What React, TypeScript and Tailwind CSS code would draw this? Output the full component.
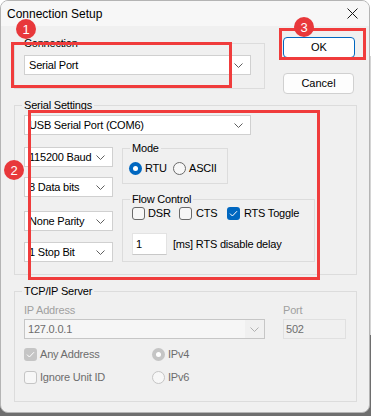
import React from 'react';

const FONT = "font-['Liberation_Sans',Arial,sans-serif]";

const Chevron: React.FC<{ color?: string }> = ({ color = '#5f5f5f' }) => (
    <svg width="9" height="5" viewBox="0 0 9 5" className="shrink-0">
        <path d="M0.5 0.5 L4.5 4.5 L8.5 0.5" fill="none" stroke={color} strokeWidth="1" />
    </svg>
);

const Combo: React.FC<{ text: string; className?: string }> = ({ text, className = '' }) => (
    <div className={`flex h-[20px] items-center justify-between border border-[#d0d0d0] bg-white pl-[4px] pr-[7px] text-[11px] tracking-[-0.2px] text-black ${className}`}>
        <span className="leading-none">{text}</span>
        <Chevron />
    </div>
);

const Group: React.FC<{ label: string; className?: string; legendClass?: string; children: React.ReactNode }> = ({
    label,
    className = '',
    legendClass = '-ml-[2px]',
    children,
}) => (
    <fieldset className={`border border-[#dcdcdc] ${className}`}>
        <legend className={`px-[2px] text-[11px] leading-[13px] tracking-[-0.2px] text-black ${legendClass}`}>{label}</legend>
        {children}
    </fieldset>
);

const Radio: React.FC<{ checked?: boolean; disabled?: boolean }> = ({ checked, disabled }) => {
    if (checked) {
        return (
            <span className={`flex h-[13px] w-[13px] shrink-0 items-center justify-center rounded-full ${disabled ? 'bg-[#c5c5c5]' : 'bg-[#0067c0]'}`}>
                <span className="h-[5px] w-[5px] rounded-full bg-white" />
            </span>
        );
    }
    return (
        <span className={`h-[13px] w-[13px] shrink-0 rounded-full border bg-[#f7f7f7] ${disabled ? 'border-[#c5c5c5]' : 'border-[#6a6a6a]'}`} />
    );
};

const Check: React.FC<{ checked?: boolean; disabled?: boolean }> = ({ checked, disabled }) => {
    if (checked) {
        return (
            <span className={`flex h-[13px] w-[13px] shrink-0 items-center justify-center rounded-[3px] ${disabled ? 'bg-[#c5c5c5]' : 'bg-[#0067c0]'}`}>
                <svg width="9" height="7" viewBox="0 0 9 7">
                    <path d="M1 3.6 L3.4 6 L8 1.2" fill="none" stroke="white" strokeWidth="1" />
                </svg>
            </span>
        );
    }
    return (
        <span className={`h-[13px] w-[13px] shrink-0 rounded-[3px] border bg-[#f7f7f7] ${disabled ? 'border-[#c5c5c5]' : 'border-[#6a6a6a]'}`} />
    );
};

const Badge: React.FC<{ n: number; className: string }> = ({ n, className }) => (
    <div className={`absolute flex h-[20px] w-[20px] items-center justify-center rounded-full bg-[#e8383b] text-[13px] font-medium leading-none text-white ${className}`}>
        {n}
    </div>
);

export default function App() {
    return (
        <div className={`relative h-[416px] w-[371px] overflow-hidden bg-[linear-gradient(to_bottom,#ffffff_0,#ffffff_56px,#d4d4d4_56px,#d4d4d4_335px,#6e6e6e_335px)] ${FONT}`}>
            <div className="flex h-[413px] w-[370px] flex-col overflow-hidden rounded-[8px] border border-[#b4b4b4] bg-[#f0f0f0]">
                {/* title bar */}
                <div className="flex h-[25px] shrink-0 items-center justify-between bg-[#f7f7f7] pl-[6px] pr-[11px]">
                    <span className="text-[12px] leading-none text-black">Connection Setup</span>
                    <svg width="11" height="11" viewBox="0 0 11 11">
                        <path d="M0.5 0.5 L10.5 10.5 M10.5 0.5 L0.5 10.5" stroke="#1a1a1a" strokeWidth="1" />
                    </svg>
                </div>

                <div className="flex flex-col pl-[13px]">
                    {/* connection + buttons */}
                    <div className="flex items-start">
                        <Group label="Connection" className="mt-[11px] w-[251px] pt-[5px] pb-[13px] pl-[9px]">
                            <Combo text="Serial Port" className="w-[227px]" />
                        </Group>
                        <div className="ml-[18px] mt-[11px] flex flex-col gap-[15px]">
                            <button className="flex h-[21px] w-[72px] items-center justify-center rounded-[4px] border border-[#0067c0] bg-white text-[11px] text-black">
                                OK
                            </button>
                            <button className="flex h-[21px] w-[71px] items-center justify-center rounded-[4px] border border-[#d0d0d0] bg-[#fdfdfd] text-[11px] text-black">
                                Cancel
                            </button>
                        </div>
                    </div>

                    {/* serial settings */}
                    <Group label="Serial Settings" className="mt-[5px] w-[343px] pt-[3px] pb-[12px] pl-[9px]">
                        <Combo text="USB Serial Port (COM6)" className="w-[227px]" />
                        <div className="mt-[7px] flex items-start">
                            <div className="flex flex-col pt-[5px]">
                                <Combo text="115200 Baud" className="w-[89px]" />
                                <Combo text="8 Data bits" className="mt-[10px] w-[89px]" />
                                <Combo text="None Parity" className="mt-[14px] w-[89px]" />
                                <Combo text="1 Stop Bit" className="mt-[11px] w-[89px]" />
                            </div>
                            <div className="ml-[9px] flex flex-col">
                                <Group label="Mode" className="w-[106px] pt-[7px] pb-[8px] pl-[6px]" legendClass="ml-[1px]">
                                    <div className="flex items-center text-[11px] tracking-[-0.2px] text-black">
                                        <div className="flex w-[44px] items-center gap-[3px]">
                                            <Radio checked />
                                            <span className="leading-none">RTU</span>
                                        </div>
                                        <div className="flex items-center gap-[3px]">
                                            <Radio />
                                            <span className="leading-none">ASCII</span>
                                        </div>
                                    </div>
                                </Group>
                                <Group label="Flow Control" className="mt-[9px] w-[193px] pt-[1px] pb-[6px] pl-[9px]">
                                    <div className="flex items-center text-[11px] tracking-[-0.2px] text-black">
                                        <div className="flex w-[47px] items-center gap-[3px]">
                                            <Check />
                                            <span className="leading-none">DSR</span>
                                        </div>
                                        <div className="flex w-[48px] items-center gap-[4px]">
                                            <Check />
                                            <span className="leading-none">CTS</span>
                                        </div>
                                        <div className="flex items-center gap-[4px]">
                                            <Check checked />
                                            <span className="leading-none">RTS Toggle</span>
                                        </div>
                                    </div>
                                    <div className="mt-[13px] flex items-center text-[11px] tracking-[-0.2px] text-black">
                                        <div className="flex h-[22px] w-[35px] items-center border border-[#e3e3e3] border-b-[#c8c8c8] bg-white pl-[3px]">
                                            <span className="leading-none">1</span>
                                        </div>
                                        <span className="ml-[6px] leading-none">[ms] RTS disable delay</span>
                                    </div>
                                </Group>
                            </div>
                        </div>
                    </Group>

                    {/* tcp/ip server */}
                    <Group label="TCP/IP Server" className="mt-[10px] w-[343px] pt-[6px] pb-[17px] pl-[9px]">
                        <div className="flex text-[11px] leading-[13px] tracking-[-0.2px] text-[#a0a0a0]">
                            <span className="w-[259px]">IP Address</span>
                            <span>Port</span>
                        </div>
                        <div className="mt-[2px] flex text-[11px] tracking-[-0.2px] text-[#6d6d6d]">
                            <div className="flex h-[20px] w-[241px] items-stretch border border-[#c6c6c6] bg-[#f0f0f0]">
                                <div className="flex flex-1 items-center bg-[#f6f6f6] pl-[3px]">
                                    <span className="leading-none">127.0.0.1</span>
                                </div>
                                <div className="flex w-[19px] items-center justify-center">
                                    <Chevron color="#b0b0b0" />
                                </div>
                            </div>
                            <div className="ml-[18px] flex h-[20px] w-[63px] items-center border border-[#e0e0e0] bg-[#f0f0f0] pl-[2px]">
                                <span className="leading-none">502</span>
                            </div>
                        </div>
                        <div className="mt-[9px] grid grid-cols-[128px_1fr] gap-y-[10px] text-[11px] tracking-[-0.2px] text-[#6d6d6d]">
                            <div className="flex items-center gap-[3px]">
                                <Check checked disabled />
                                <span className="leading-none">Any Address</span>
                            </div>
                            <div className="flex items-center gap-[3px]">
                                <Radio checked disabled />
                                <span className="leading-none">IPv4</span>
                            </div>
                            <div className="flex items-center gap-[3px]">
                                <Check disabled />
                                <span className="leading-none">Ignore Unit ID</span>
                            </div>
                            <div className="flex items-center gap-[3px]">
                                <Radio disabled />
                                <span className="leading-none">IPv6</span>
                            </div>
                        </div>
                    </Group>
                </div>
            </div>

            {/* annotations */}
            <div className="absolute left-[11px] top-[42px] h-[46px] w-[221px] border-[3px] border-[#f03c3c]" />
            <div className="absolute left-[279px] top-[28px] h-[32px] w-[87px] border-[3px] border-[#f03c3c]" />
            <div className="absolute left-[28px] top-[110px] h-[170px] w-[292px] border-[3px] border-[#f03c3c]" />
            <Badge n={1} className="left-[16px] top-[19px]" />
            <Badge n={3} className="left-[294px] top-[17px]" />
            <Badge n={2} className="left-[4px] top-[160px]" />
        </div>
    );
}
